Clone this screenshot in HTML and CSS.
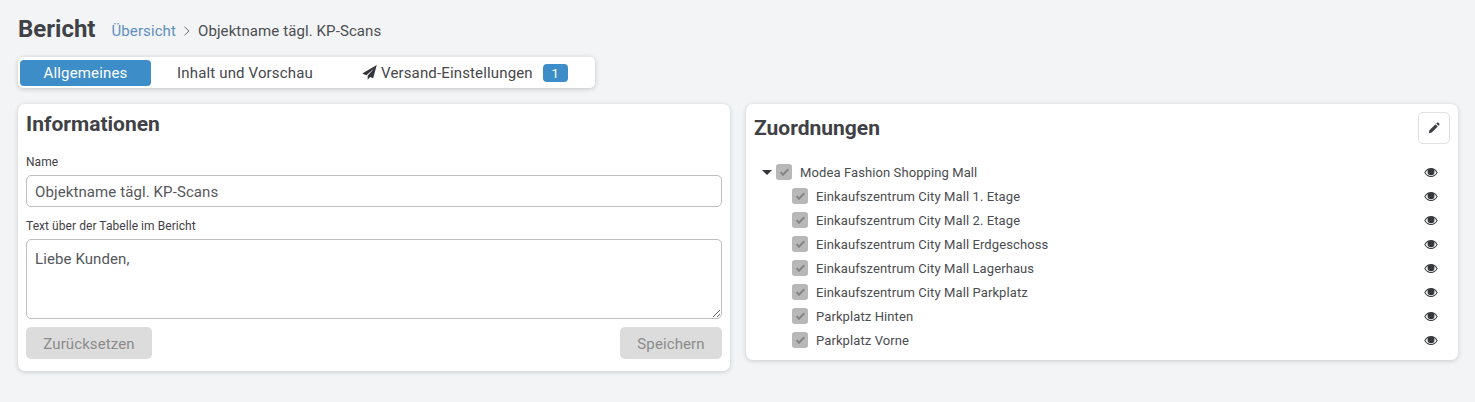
FILE: index.html
```html
<!DOCTYPE html>
<html lang="de">
<head>
    <meta charset="UTF-8">
    <title>Bericht</title>
    <link rel="stylesheet" href="styles.css">
</head>
<body>
    <svg class="sprites" width="0" height="0">
        <symbol id="eye" viewBox="0 0 16 12">
            <path d="M8 .8C4.6.8 1.9 2.9.3 6c1.6 3.100 4.300 5.200 7.700 5.200s6.100-2.100 7.700-5.200C14.100 2.900 11.400.8 8 .8zM8 10.100c-2.700 0-5-1.600-6.400-4.100.8-1.400 1.900-2.500 3.200-3.200A4 4 0 0 0 4 5.200a4 4 0 0 0 8 0c0-.9-.3-1.700-.8-2.400 1.300.7 2.400 1.800 3.200 3.200-1.400 2.500-3.700 4.100-6.400 4.100z"/>
        </symbol>
        <symbol id="check" viewBox="0 0 12 12">
            <path d="M1 6.500l3.500 3.500L11 3 9.400 1.500 4.500 6.800 2.500 4.900z"/>
        </symbol>
    </svg>

    <div class="page">
        <div class="header">
            <h1>Bericht</h1>
            <div class="breadcrumb">
                <a href="#">Übersicht</a>
                <svg class="crumb-sep" width="8" height="10" viewBox="0 0 8 10"><path d="M1.500 .8L6 5 1.500 9.200" fill="none" stroke="#6b6e73" stroke-width="1"/></svg>
                <span>Objektname tägl. KP-Scans</span>
            </div>
        </div>

        <div class="tabs">
            <div class="tab active">Allgemeines</div>
            <div class="tab tab-content">Inhalt und Vorschau</div>
            <div class="tab tab-send">
                <svg class="plane" width="15" height="15" viewBox="0 0 14 14"><path d="M13.800 .1L.2 7.900l3.900 1.600L11.500 3 5.300 10.100v3.700l2.200-2.700 2.900 1.200z"/></svg>
                Versand-Einstellungen
                <span class="badge">1</span>
            </div>
        </div>

        <div class="columns">
            <div class="card card-info">
                <h2>Informationen</h2>
                <label class="field-label">Name</label>
                <input class="field" type="text" value="Objektname tägl. KP-Scans">
                <label class="field-label second">Text über der Tabelle im Bericht</label>
                <textarea class="field area">Liebe Kunden,</textarea>
                <div class="actions">
                    <button class="btn btn-reset" disabled>Zurücksetzen</button>
                    <button class="btn btn-save" disabled>Speichern</button>
                </div>
            </div>

            <div class="card card-assign">
                <div class="card-head">
                    <h2>Zuordnungen</h2>
                    <button class="edit-btn">
                        <svg width="12" height="12" viewBox="0 0 12 12"><path d="M.8 11.200l.6-2.900 6.100-6.100 2.300 2.300-6.100 6.100zM8.200 1.500l.8-.8c.4-.4 1-.4 1.400 0l.9.900c.4.400.4 1 0 1.400l-.8.800z"/></svg>
                    </button>
                </div>
                <ul class="tree">
                    <li class="tree-row root">
                        <span class="caret"></span>
                        <span class="box"><svg><use href="#check"/></svg></span>
                        <span class="tree-name">Modea Fashion Shopping Mall</span>
                        <svg class="eye"><use href="#eye"/></svg>
                    </li>
                    <li class="tree-row">
                        <span class="box"><svg><use href="#check"/></svg></span>
                        <span class="tree-name">Einkaufszentrum City Mall 1. Etage</span>
                        <svg class="eye"><use href="#eye"/></svg>
                    </li>
                    <li class="tree-row">
                        <span class="box"><svg><use href="#check"/></svg></span>
                        <span class="tree-name">Einkaufszentrum City Mall 2. Etage</span>
                        <svg class="eye"><use href="#eye"/></svg>
                    </li>
                    <li class="tree-row">
                        <span class="box"><svg><use href="#check"/></svg></span>
                        <span class="tree-name">Einkaufszentrum City Mall Erdgeschoss</span>
                        <svg class="eye"><use href="#eye"/></svg>
                    </li>
                    <li class="tree-row">
                        <span class="box"><svg><use href="#check"/></svg></span>
                        <span class="tree-name">Einkaufszentrum City Mall Lagerhaus</span>
                        <svg class="eye"><use href="#eye"/></svg>
                    </li>
                    <li class="tree-row">
                        <span class="box"><svg><use href="#check"/></svg></span>
                        <span class="tree-name">Einkaufszentrum City Mall Parkplatz</span>
                        <svg class="eye"><use href="#eye"/></svg>
                    </li>
                    <li class="tree-row">
                        <span class="box"><svg><use href="#check"/></svg></span>
                        <span class="tree-name">Parkplatz Hinten</span>
                        <svg class="eye"><use href="#eye"/></svg>
                    </li>
                    <li class="tree-row">
                        <span class="box"><svg><use href="#check"/></svg></span>
                        <span class="tree-name">Parkplatz Vorne</span>
                        <svg class="eye"><use href="#eye"/></svg>
                    </li>
                </ul>
            </div>
        </div>
    </div>
</body>
</html>
```

FILE: styles.css
```css
* {
    box-sizing: border-box;
}

html, body {
    height: 100%;
}

body {
    margin: 0;
    background-color: #f3f4f6;
    color: #424448;
    font-family: Roboto, "Liberation Sans", sans-serif;
    font-size: 14px;
    overflow: hidden;
}

.sprites {
    display: block;
    height: 0;
}

.page {
    padding: 13px 17px 0 18px;
}

.header {
    display: flex;
    align-items: center;
    height: 32px;
}

h1 {
    margin: 0 16px 0 0;
    font-size: 24px;
    font-weight: 700;
    color: #3f4146;
}

.breadcrumb {
    display: flex;
    align-items: center;
    gap: 7px;
    padding-top: 4px;
    font-size: 15px;
    letter-spacing: 0.1px;
    color: #4c4e52;
}

.breadcrumb a {
    color: #5f8fc0;
    text-decoration: none;
}

.tabs {
    display: inline-flex;
    align-items: center;
    width: 577px;
    height: 31px;
    margin-top: 12px;
    padding: 2px;
    background-color: #fff;
    border-radius: 5px;
    box-shadow: 0 1px 5px rgba(0, 0, 0, 0.2);
    font-size: 15px;
    letter-spacing: 0.15px;
    vertical-align: top;
}

.tab {
    display: flex;
    align-items: center;
    justify-content: center;
    height: 26px;
    border-radius: 4px;
    color: #45474b;
}

.tab.active {
    width: 131px;
    background-color: #3d8dc9;
    color: #fff;
}

.tab-content {
    width: 188px;
}

.tab-send {
    gap: 4px;
    padding-left: 23px;
}

.plane {
    fill: #33353a;
}

.badge {
    display: inline-block;
    width: 25px;
    height: 18px;
    margin-left: 6px;
    background-color: #3d8dc9;
    border-radius: 4px;
    color: #fff;
    font-size: 13px;
    line-height: 19px;
    text-align: center;
}

.columns {
    display: flex;
    align-items: flex-start;
    gap: 16px;
    margin-top: 16px;
}

.card {
    flex: 1;
    padding: 8px;
    background-color: #fff;
    border-radius: 7px;
    box-shadow: 0 1px 5px rgba(0, 0, 0, 0.18);
}

.card-info {
    height: 267px;
}

.card-assign {
    height: 256px;
}

h2 {
    margin: 0;
    font-size: 21px;
    font-weight: 700;
    line-height: 25px;
    color: #3f4146;
}

.field-label {
    display: block;
    margin-top: 17px;
    font-size: 12px;
    line-height: 16px;
    letter-spacing: 0.06px;
    color: #3f4146;
}

.field-label.second {
    margin-top: 11px;
}

.field {
    display: block;
    width: 100%;
    height: 32px;
    margin-top: 5px;
    padding: 1px 8px 0;
    background-color: #fff;
    border: 1px solid #bdbdbd;
    border-radius: 5px;
    color: #55575b;
    font-family: Roboto, "Liberation Sans", sans-serif;
    font-size: 15px;
    letter-spacing: 0.1px;
}

.area {
    height: 80px;
    padding-top: 10px;
    line-height: 18px;
}

.actions {
    display: flex;
    justify-content: space-between;
    margin-top: 8px;
}

.btn {
    height: 32px;
    padding: 1px 0 0;
    background-color: #dcdcdc;
    border: none;
    border-radius: 5px;
    color: #8b8b8b;
    font-family: Roboto, "Liberation Sans", sans-serif;
    font-size: 15px;
    letter-spacing: 0.1px;
}

.btn-reset {
    width: 126px;
}

.btn-save {
    width: 102px;
}

.card-head {
    display: flex;
    align-items: center;
    justify-content: space-between;
}

.card-head h2 {
    padding-top: 1px;
}

.edit-btn {
    display: flex;
    align-items: center;
    justify-content: center;
    width: 32px;
    height: 32px;
    padding: 0;
    background-color: #fff;
    border: 1px solid #dfdfdf;
    border-radius: 5px;
}

.edit-btn svg {
    fill: #3f4146;
}

.tree {
    margin: 16px 0 0;
    padding: 0;
    list-style: none;
}

.tree-row {
    display: flex;
    align-items: center;
    height: 24px;
    padding-left: 38px;
    padding-right: 12px;
    font-size: 13px;
    letter-spacing: 0.1px;
    color: #4a4c50;
}

.tree-row.root {
    padding-left: 8px;
}

.caret {
    width: 0;
    height: 0;
    margin-right: 4px;
    border-left: 5px solid transparent;
    border-right: 5px solid transparent;
    border-top: 5px solid #33353a;
}

.box {
    display: flex;
    align-items: center;
    justify-content: center;
    width: 16px;
    height: 16px;
    margin-right: 8px;
    background-color: #b8b8b8;
    border-radius: 3px;
}

.box svg {
    width: 11px;
    height: 11px;
    fill: #858585;
}

.tree-name {
    flex: 1;
}

.eye {
    width: 14px;
    height: 11px;
    fill: #36383c;
}
```
